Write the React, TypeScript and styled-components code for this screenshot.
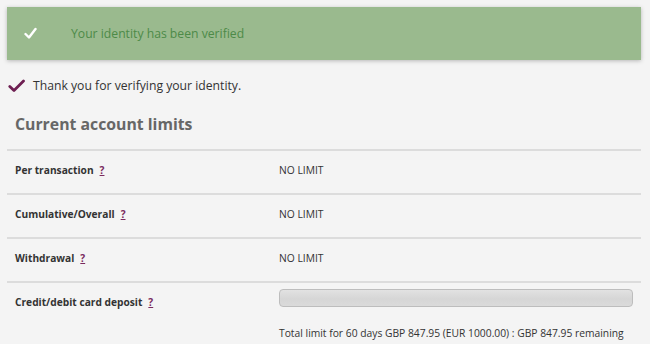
import React from "react";
import styled, { createGlobalStyle } from "styled-components";

const Global = createGlobalStyle`
  html, body { margin: 0; padding: 0; background: #f4f4f4; }
  body { font-family: "Open Sans", "DejaVu Sans", sans-serif; color: #333; }
`;

const Page = styled.div`
  padding: 7px 9px 0 7px;
  width: 634px;
`;

const Banner = styled.div`
  display: flex;
  align-items: center;
  height: 53px;
  background: #9aba8e;
  box-shadow: 0 1px 4px rgba(0, 0, 0, 0.25);
  padding-left: 17px;
`;

const BannerIcon = styled.svg`
  width: 13px;
  height: 13px;
  margin-right: 34px;
`;

const BannerText = styled.span`
  color: #4d8a48;
  font-size: 12.2px;
`;

const Notice = styled.div`
  display: flex;
  align-items: center;
  margin-top: 17px;
  font-size: 12.2px;
  color: #333;
`;

const NoticeIcon = styled.svg`
  width: 17px;
  height: 14px;
  margin: 0 8px 0 1px;
`;

const Heading = styled.h2`
  margin: 18px 0 0 8px;
  font-size: 15.8px;
  font-weight: 700;
  color: #676767;
  line-height: 24px;
`;

const Table = styled.div`
  margin-top: 13px;
`;

const Row = styled.div`
  display: grid;
  grid-template-columns: 272px minmax(0, 1fr);
  border-top: 2px solid #dcdcdc;
  min-height: 42px;
  align-items: start;
`;

const Label = styled.div`
  padding: 10px 0 0 8px;
  font-size: 10.2px;
  font-weight: 700;
  line-height: 18px;
  color: #333;
`;

const Help = styled.span`
  color: #7a2a5e;
  text-decoration: underline;
  margin-left: 6px;
`;

const Value = styled.div`
  padding-top: 10px;
  font-size: 10.3px;
  line-height: 18px;
  color: #333;
`;

const BarCell = styled.div`
  padding-top: 6px;
  padding-right: 8px;
`;

const Bar = styled.div`
  height: 16px;
  border: 1px solid #bdbdbd;
  border-radius: 4px;
  background: linear-gradient(#e2e2e2, #d6d6d6 55%, #dadada);
`;

const Note = styled.div`
  margin-top: 17px;
  font-size: 10.3px;
  line-height: 18px;
  color: #333;
  white-space: nowrap;
`;

const rows = [
  { label: "Per transaction", value: "NO LIMIT" },
  { label: "Cumulative/Overall", value: "NO LIMIT" },
  { label: "Withdrawal", value: "NO LIMIT" },
];

export default function App() {
  return (
    <>
      <Global />
      <Page>
        <Banner>
          <BannerIcon viewBox="0 0 13 13">
            <path d="M1.5 7 L5 10.5 L11.5 2" fill="none" stroke="#fff" strokeWidth="2.4" strokeLinecap="round" strokeLinejoin="round" />
          </BannerIcon>
          <BannerText>Your identity has been verified</BannerText>
        </Banner>
        <Notice>
          <NoticeIcon viewBox="0 0 17 14">
            <path d="M1.8 7.5 L6 11.5 L15.5 2" fill="none" stroke="#6e1f52" strokeWidth="2.8" strokeLinecap="round" strokeLinejoin="round" />
          </NoticeIcon>
          Thank you for verifying your identity.
        </Notice>
        <Heading>Current account limits</Heading>
        <Table>
          {rows.map((r) => (
            <Row key={r.label}>
              <Label>
                {r.label}
                <Help>?</Help>
              </Label>
              <Value>{r.value}</Value>
            </Row>
          ))}
          <Row>
            <Label>
              Credit/debit card deposit
              <Help>?</Help>
            </Label>
            <BarCell>
              <Bar />
              <Note>Total limit for 60 days GBP 847.95 (EUR 1000.00) : GBP 847.95 remaining</Note>
            </BarCell>
          </Row>
        </Table>
      </Page>
    </>
  );
}
